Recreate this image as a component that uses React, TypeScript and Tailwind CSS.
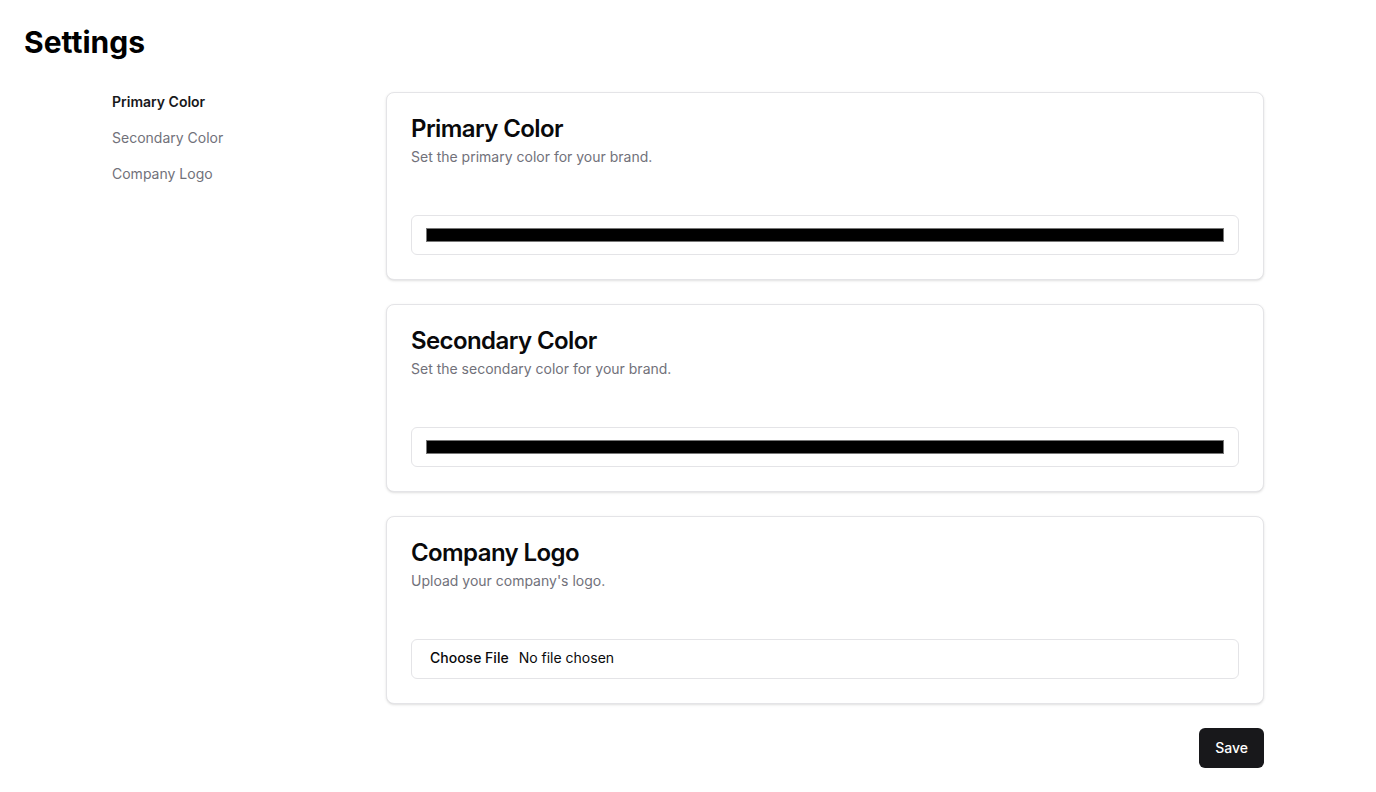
import React from "react";

function Card({ title, desc, children }: { title: string; desc: string; children: React.ReactNode }) {
  return (
    <div className="rounded-lg border border-[#e4e4e7] bg-white text-[#09090b] shadow-sm">
      <div className="flex flex-col gap-1.5 p-6">
        <h3 className="text-2xl font-semibold leading-none tracking-tight">{title}</h3>
        <p className="text-sm text-[#71717a]">{desc}</p>
      </div>
      <div className="p-6 pt-0">
        <div className="pt-6">{children}</div>
      </div>
    </div>
  );
}

const inputCls =
  "flex h-10 w-full rounded-md border border-[#e4e4e7] bg-white px-3 py-2 text-sm text-[#09090b]";

export default function App() {
  return (
    <div className="min-h-screen bg-white text-[#09090b]" style={{ fontFamily: "Inter, 'Noto Sans', sans-serif" }}>
      <div className="p-6">
        <h1 className="text-3xl font-bold leading-9 text-black">Settings</h1>
      </div>
      <div className="mx-auto mt-2 grid w-full max-w-6xl grid-cols-[250px_1fr] items-start gap-6">
        <nav className="flex flex-col gap-4 text-sm text-[#71717a]">
          <a href="#" className="font-semibold text-[#18181b]">Primary Color</a>
          <a href="#">Secondary Color</a>
          <a href="#">Company Logo</a>
        </nav>
        <div className="flex flex-col gap-6">
          <Card title="Primary Color" desc="Set the primary color for your brand.">
            <input type="color" defaultValue="#000000" className={inputCls} />
          </Card>
          <Card title="Secondary Color" desc="Set the secondary color for your brand.">
            <input type="color" defaultValue="#000000" className={inputCls} />
          </Card>
          <Card title="Company Logo" desc="Upload your company's logo.">
            <input
              type="file"
              className={inputCls + " file:mr-1 file:border-0 file:bg-transparent file:px-[6px] file:text-sm file:font-medium"}
            />
          </Card>
          <div className="flex justify-end">
            <button className="inline-flex h-10 items-center justify-center rounded-md bg-[#18181b] px-4 text-sm font-medium text-white">
              Save
            </button>
          </div>
        </div>
      </div>
    </div>
  );
}
